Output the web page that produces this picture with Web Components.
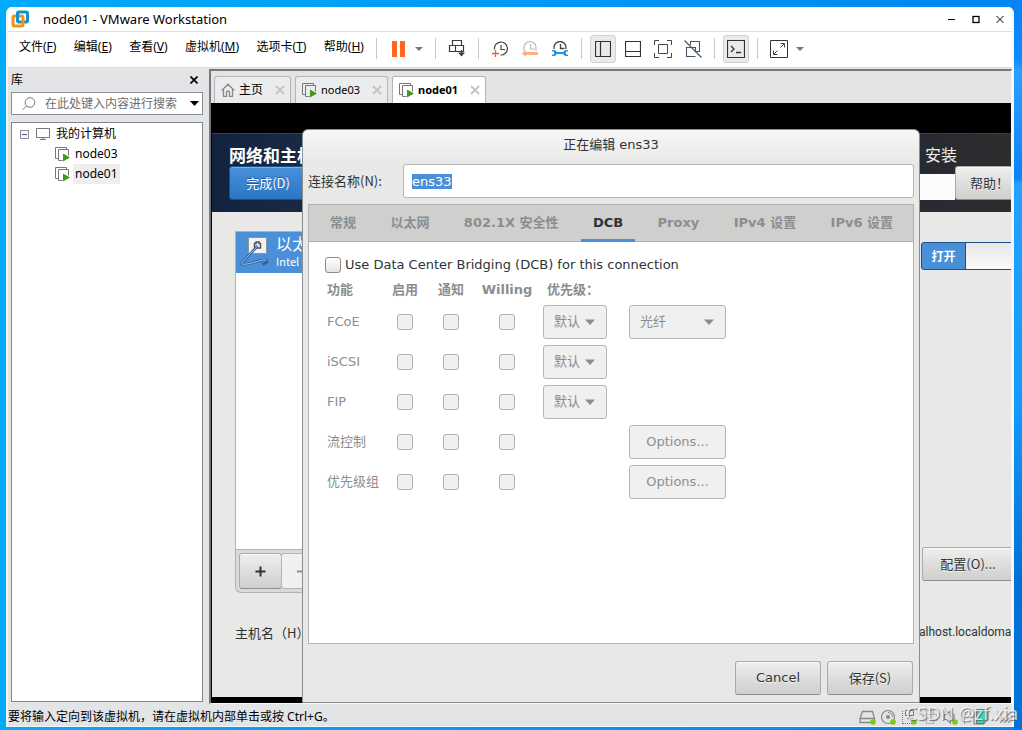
<!DOCTYPE html>
<html lang="zh-CN">
<head>
<meta charset="utf-8">
<title>node01 - VMware Workstation</title>
<style>
	html, body {
		height: 100%;
		margin: 0;
	}
	body {
		box-sizing: border-box;
		padding: 7px 8px 3px 6px;
		overflow: hidden;
		font: 12px/20px "Noto Sans", "Noto Sans CJK SC", sans-serif;
		color: #000;
		background:
			linear-gradient(to bottom, #0a80f4, #0c8cff 60px, #2a9fff 70px, #0a84f4 178px, #22a2ff 184px, #149afc 400px, #0070d8 580px, #0074dc) right / 8px 100% no-repeat,
			linear-gradient(to right, #00acfa, #009cf6 45%, #0086f0);
	}
</style>
</head>
<body>
<vm-window>
	<span slot="title">node01 - VMware Workstation</span>
	<vm-menu slot="bar"></vm-menu>
	<vm-toolbar slot="bar"></vm-toolbar>
	<vm-library slot="side"></vm-library>
	<vm-tab slot="tabs" icon="home">主页</vm-tab>
	<vm-tab slot="tabs" icon="running">node03</vm-tab>
	<vm-tab slot="tabs" icon="running" active>node01</vm-tab>
	<guest-screen slot="screen">
		<gtk-dialog>
			<span slot="title">正在编辑 ens33</span>
			<connection-name slot="name"></connection-name>
			<gtk-notebook slot="content" tabs="常规,以太网,802.1X 安全性,DCB,Proxy,IPv4 设置,IPv6 设置" current="DCB">
				<dcb-page></dcb-page>
			</gtk-notebook>
			<gtk-button slot="actions" class="dialog">Cancel</gtk-button>
			<gtk-button slot="actions" class="dialog cjk">保存(S)</gtk-button>
		</gtk-dialog>
	</guest-screen>
	<vm-status slot="status">要将输入定向到该虚拟机，请在虚拟机内部单击或按 Ctrl+G。</vm-status>
</vm-window>

<script>
const ICONS = {
	logo: [18, 18, `<g fill="none" stroke-width="3"><rect x="6.500" y="2" width="10" height="10" rx="1.500" stroke="#0d93d0"/><rect x="2" y="6" width="10" height="10" rx="1.500" stroke="#f8910f"/><path d="M6.500 8.500V3.500" stroke="#0d93d0"/></g>`],
	minimize: [8, 9, `<path d="M0 4.500h7" stroke="#000" stroke-width="1"/>`],
	maximize: [8, 9, `<rect x="1" y="1.500" width="6" height="6" fill="none" stroke="#000" stroke-width="1.300"/>`],
	close: [8, 9, `<path d="M.5 1l7 7M7.500 1l-7 7" stroke="#000"/>`],
	closeBold: [8, 8, `<path d="M.5.5l7 7M7.500.5l-7 7" stroke="#000" stroke-width="1.700"/>`],
	closeTab: [10, 10, `<path d="M1 1l8 8M9 1l-8 8" stroke="#c4c4c4" stroke-width="1.800"/>`],
	arrow: [8, 4, `<path d="M0 0h8l-4 4z" fill="#777"/>`],
	arrowBlack: [9, 5, `<path d="M0 0h9l-4.500 5z" fill="#000"/>`],
	arrowGtk: [10, 6, `<path d="M0 .5h10l-5 5.500z" fill="#8b8e8f"/>`],
	search: [14, 14, `<g fill="none" stroke="#777"><circle cx="8" cy="5.500" r="4.800"/><path d="M4.500 9L.5 13"/></g>`],
	home: [14, 14, `<path d="M.7 7.500L7 1.200l6.300 6.300M2.500 6.500v6.800h3V9.500a1.500 1.500 0 0 1 3 0v3.800h3V6.500" fill="none" stroke="#888" stroke-width="1.300"/>`],
	running: [15, 15, `<path d="M3.500 11.500H.5V.5h11v2M7.500 13.500h-4v-11h10v6" fill="none" stroke="#777"/><path d="M8 6.500l7 4-7 4z" fill="#3f9c12"/>`],
	computer: [14, 12, `<path d="M.5.5h13v9H.5z" fill="none" stroke="#777"/><path d="M7 9.500v2M4 11.500h6" stroke="#777"/>`],
	collapse: [9, 9, `<rect x=".5" y=".5" width="8" height="8" fill="#f6f6f6" stroke="#919191"/><path d="M2 4.500h5" stroke="#4455a0"/>`],
	pause: [13, 16, `<path d="M0 0h5v16H0zM8 0h5v16H8z" fill="#ff671b"/>`],
	send: [18, 17, `<g fill="none" stroke="#3c3c3c"><path d="M4.500.5h9v5h-9zM7.500 11.500h-6v-6h6zM7.500 5.500h8v6h-8M13.500 10v5" stroke-width="1.200"/></g><path d="M10 12.500h7l-3.500 4z" fill="#3c3c3c"/>`],
	snapshot: [16, 16, `<path d="M2.500 8.500a6.500 6.500 0 1 1 6 5.500M9 4v4.500h4" fill="none" stroke="#444" stroke-width="1.200"/><path d="M0 12.500h7M3.500 9v7" stroke="#f1632a" stroke-width="1.300"/>`],
	revert: [16, 16, `<path d="M2 10V6.500a6 6 0 0 1 12 0V10M8.500 3v5h4" fill="none" stroke="#bbb" stroke-width="1.200"/><path d="M0 12.500l4-3.500v2h12v3H4v2z" fill="#ffad84"/>`],
	manage: [16, 16, `<path d="M2 8V6.500a6 6 0 0 1 12 0V8M8.500 3v4.500h4" fill="none" stroke="#444" stroke-width="1.300"/><path d="M0 9h3l2 2h6l2-2h3v1.500h-2v3h2V15h-3l-2-2H5l-2 2H0v-1.500h2v-3H0z" fill="#2596dc"/>`],
	sidebar: [16, 16, `<path d="M.5.5h15v15H.5zM5.500.5v15" fill="none" stroke="#333" stroke-width="1.200"/>`],
	console: [16, 16, `<path d="M.5.5h15v15H.5zM.5 10.500h15" fill="none" stroke="#333" stroke-width="1.200"/>`],
	fullscreen: [18, 18, `<path d="M.5 5V.5H5M13 .5h4.500V5M17.500 13v4.500H13M5 17.500H.5V13M4.500 4.500h9v9h-9z" fill="none" stroke="#444"/>`],
	unity: [18, 18, `<path d="M6.500 5V1.500h9v10h-3M11.500 16.500h-9v-9h9v5M.5.500l17 17" fill="none" stroke="#445566" stroke-width="1.100"/>`],
	terminal: [18, 18, `<path d="M.5.5h17v17H.5z" fill="none" stroke="#333" stroke-width="1.200"/><path d="M4 6l3 3-3 3M9 12.500h5" fill="none" stroke="#333" stroke-width="1.300"/>`],
	stretch: [18, 18, `<path d="M.5.5h17v17H.5z" fill="none" stroke="#333"/><path d="M10.500 3.500h4v4M7.500 14.500h-4v-4M14 4l-3.500 3.500M4 14l3.500-3.500" fill="none" stroke="#444"/>`],
	ethernet: [32, 32, `<rect x="8.500" y=".5" width="18" height="16" rx="1" fill="#f2f2f0" stroke="#8c9398"/><path d="M14.500 11v-4.500h1.500V5h3v1.500h1.500V11z" fill="none" stroke="#454d55" stroke-width="1.400"/><path d="M17.500 9L2.500 25c-2 3 2 2.500 7 1.500s15-5 17-3-2 3-4 4" fill="none" stroke="#2f5f9f" stroke-width="2.600"/><path d="M17.500 9L2.500 25c-2 3 2 2.500 7 1.500s15-5 17-3" fill="none" stroke="#a8c6ea"/>`],
	disk: [18, 16, `<path d="M3.500 2.500h10l2 7v4H1v-4zM1 9.500h14.500" fill="none" stroke="#888" stroke-width="1.300"/><circle cx="14" cy="13" r="2.800" fill="#7dc81e"/>`],
	cd: [18, 16, `<circle cx="8" cy="8" r="6.500" fill="none" stroke="#888" stroke-width="1.200"/><circle cx="8" cy="8" r="2" fill="#888"/><path d="M8 3.500A4.500 4.500 0 0 1 12.500 8" fill="none" stroke="#888"/><circle cx="13" cy="13" r="2.800" fill="#7dc81e"/>`],
	network: [18, 16, `<path d="M1.500 2v13M2 14.500h9" stroke="#777" stroke-dasharray="1 1"/><path d="M4.500 1.500h8v5h-8zM8.500 6.500v3M6 9.500h7" fill="none" stroke="#777"/><circle cx="13" cy="13" r="2.800" fill="#7dc81e"/>`],
	printer: [18, 16, `<path d="M4.500 5.500v-4h7v4M3.500 11.500h-2v-6h13v6h-2M4.500 9.500h7v5h-7z" fill="none" stroke="#b4b4b4" stroke-width="1.200"/>`],
	sound: [18, 16, `<path d="M1.500 5.500h2l4-3.500v12l-4-3.500h-2zM10 4.500q2.500 3.500 0 7" fill="none" stroke="#888" stroke-width="1.200"/><circle cx="12" cy="13" r="2.800" fill="#7dc81e"/>`],
	note: [16, 16, `<path d="M3.500.5H15v10l-4 4H3.500z" fill="#36d8c0" stroke="#777"/><path d="M1 3.500v11.500h10V11h4" fill="none" stroke="#777"/>`],
	grip: [12, 12, `<path d="M0 12L12 0M4 12l8-8M8 12l4-4" stroke="#999" stroke-width="1.500"/>`],
	plus: [11, 11, `<path d="M5.500 .5v10M.5 5.500h10" stroke="#2e3436" stroke-width="2"/>`],
	minus: [11, 11, `<path d="M0 5.500h10" stroke="#8b8e8f" stroke-width="2"/>`]
};

class VmIcon extends HTMLElement {
	constructor() {
		super();
		this.attachShadow({ mode: 'open' });
	}
	connectedCallback() {
		const [w, h, body] = ICONS[this.getAttribute('name')];
		this.shadowRoot.innerHTML = `
		<style>
			:host { display: inline-flex; flex: none; }
			svg { display: block; }
		</style>
		<svg width="${w}" height="${h}" viewBox="0 0 ${w} ${h}" aria-hidden="true">${body}</svg>
		`
	}
}
customElements.define('vm-icon', VmIcon);

/* Outer frame: title bar, menu row, side panel, tabs, screen, status bar */
class VmWindow extends HTMLElement {
	constructor() {
		super();
		this.attachShadow({ mode: 'open' });
		this.shadowRoot.innerHTML = `
		<style>
			:host {
				display: flex;
				flex-direction: column;
				height: 100%;
				box-sizing: border-box;
				border: 0 solid #f4f5f6;
				border-width: 0 2px 1px 2px;
				border-radius: 6px 6px 0 0;
				background: #e3e4e6;
			}
			header {
				display: flex;
				align-items: center;
				height: 24px;
				padding-left: 3px;
				border-radius: 4px 4px 0 0;
				background: #fff;
				border-bottom: 1px solid #dfdfdf;
			}
			h1 {
				flex: 1;
				margin: 0 0 0 14px;
				font-size: 13px;
				font-weight: normal;
			}
			header button {
				display: grid;
				place-items: center;
				width: 24px;
				height: 24px;
				padding: 0;
				border: 0;
				background: none;
			}
			.bar {
				display: flex;
				align-items: center;
				height: 33px;
				padding-bottom: 2px;
				background: #fff;
				border-bottom: 1px solid #dcdcdc;
			}
			.work {
				flex: 1;
				display: flex;
				min-height: 0;
			}
			.side {
				display: flex;
				width: 201px;
			}
			main {
				flex: 1;
				min-width: 0;
				display: flex;
				flex-direction: column;
				margin-top: 1px;
				border: 1px solid #77777b;
				border-width: 2px 0 0 2px;
				border-right: 1px solid #f4f5f6;
				border-bottom: 1px solid #f4f5f6;
			}
			nav {
				display: flex;
				align-items: flex-end;
				gap: 4px;
				height: 32px;
				padding-left: 3px;
			}
			.screen {
				flex: 1;
				min-height: 0;
				display: flex;
			}
		</style>
		<header>
			<vm-icon name="logo"></vm-icon>
			<h1><slot name="title"></slot></h1>
			<button aria-label="minimize"><vm-icon name="minimize"></vm-icon></button>
			<button aria-label="maximize"><vm-icon name="maximize"></vm-icon></button>
			<button aria-label="close"><vm-icon name="close"></vm-icon></button>
		</header>
		<div class="bar"><slot name="bar"></slot></div>
		<div class="work">
			<div class="side"><slot name="side"></slot></div>
			<main>
				<nav><slot name="tabs"></slot></nav>
				<div class="screen"><slot name="screen"></slot></div>
			</main>
		</div>
		<slot name="status"></slot>
		`
	}
}
customElements.define('vm-window', VmWindow);

class VmMenu extends HTMLElement {
	constructor() {
		super();
		this.attachShadow({ mode: 'open' });
		const items = [['文件', 'F'], ['编辑', 'E'], ['查看', 'V'], ['虚拟机', 'M'], ['选项卡', 'T'], ['帮助', 'H']];
		this.shadowRoot.innerHTML = `
		<style>
			:host {
				display: flex;
				width: 362px;
				padding-bottom: 3px;
			}
			nav {
				flex: 1;
				display: flex;
				justify-content: space-between;
				padding: 0 6px 0 11px;
			}
			button {
				padding: 0;
				border: 0;
				background: none;
				font: inherit;
				color: inherit;
				white-space: nowrap;
			}
		</style>
		<nav>${items.map(i => `<button>${i[0]}(<u>${i[1]}</u>)</button>`).join('')}</nav>
		`
	}
}
customElements.define('vm-menu', VmMenu);

class VmToolbar extends HTMLElement {
	constructor() {
		super();
		this.attachShadow({ mode: 'open' });
		const groups = [
			['pause', 'arrow'],
			['send'],
			['snapshot', 'revert', 'manage'],
			['sidebar*', 'console', 'fullscreen', 'unity'],
			['terminal*'],
			['stretch', 'arrow']
		];
		const button = (name) => {
			const icon = name.replace('*', '');
			const kind = name.endsWith('*') ? 'on' : icon === 'arrow' ? 'drop' : '';
			return `<button class="${kind}" aria-label="${icon}"><vm-icon name="${icon}"></vm-icon></button>`
		};
		this.shadowRoot.innerHTML = `
		<style>
			:host { display: flex; }
			div {
				display: flex;
				align-items: center;
			}
			div::before {
				content: "";
				width: 1px;
				height: 21px;
				margin: 0 6px;
				background: #c8c8c8;
			}
			button {
				display: grid;
				place-items: center;
				box-sizing: border-box;
				width: 30px;
				height: 30px;
				padding: 0;
				border: 0;
				background: none;
			}
			.drop { width: 12px; margin-right: 4px; }
			.on {
				width: 26px;
				height: 28px;
				margin: 0 2px;
				border: 1px solid #d2d2d2;
				border-radius: 3px;
				background: #e9eaeb;
			}
		</style>
		${groups.map(g => `<div>${g.map(button).join('')}</div>`).join('')}
		`
	}
}
customElements.define('vm-toolbar', VmToolbar);

class VmLibrary extends HTMLElement {
	constructor() {
		super();
		this.attachShadow({ mode: 'open' });
		this.shadowRoot.innerHTML = `
		<style>
			:host {
				flex: 1;
				display: flex;
				flex-direction: column;
				min-width: 0;
				padding: 0 6px 2px 3px;
			}
			header {
				display: flex;
				align-items: center;
				justify-content: space-between;
				height: 24px;
				padding-right: 5px;
			}
			h2 {
				margin: 0;
				font-size: 12px;
				font-weight: normal;
			}
			button {
				display: grid;
				padding: 0;
				border: 0;
				background: none;
			}
			.search {
				display: flex;
				align-items: center;
				gap: 9px;
				height: 21px;
				padding: 0 3px 0 10px;
				border: 1px solid #8c8f94;
				background: #fff;
			}
			input {
				flex: 1;
				min-width: 0;
				padding: 0;
				border: 0;
				outline: 0;
				background: none;
				font: inherit;
			}
			input::placeholder { color: #6d6d6d; opacity: 1; }
			ul {
				margin: 0;
				padding: 0;
				list-style: none;
			}
			.tree {
				flex: 1;
				margin-top: 7px;
				padding-top: 1px;
				border: 1px solid #82868f;
				background: #fff;
			}
			.row {
				display: flex;
				align-items: center;
				height: 20px;
				padding-left: 8px;
			}
			.row span { padding: 0 2px; margin-left: 4px; }
			.row vm-icon + vm-icon { margin-left: 7px; }
			ul ul .row { padding-left: 43px; }
			ul ul .row span { margin-left: 3px; }
			.current { background: #eee; }
		</style>
		<header><h2>库</h2><button aria-label="close"><vm-icon name="closeBold"></vm-icon></button></header>
		<div class="search">
			<vm-icon name="search"></vm-icon>
			<input type="text" placeholder="在此处键入内容进行搜索" aria-label="搜索">
			<vm-icon name="arrowBlack"></vm-icon>
		</div>
		<ul class="tree">
			<li>
				<div class="row"><vm-icon name="collapse"></vm-icon><vm-icon name="computer"></vm-icon><span>我的计算机</span></div>
				<ul>
					<li class="row"><vm-icon name="running"></vm-icon><span>node03</span></li>
					<li class="row"><vm-icon name="running"></vm-icon><span class="current">node01</span></li>
				</ul>
			</li>
		</ul>
		`
	}
}
customElements.define('vm-library', VmLibrary);

class VmTab extends HTMLElement {
	constructor() {
		super();
		this.attachShadow({ mode: 'open' });
	}
	connectedCallback() {
		this.shadowRoot.innerHTML = `
		<style>
			:host {
				display: flex;
				align-items: center;
				box-sizing: border-box;
				height: 27px;
				padding: 0 5px 0 6px;
				border: 1px solid #b4b4b6;
				border-bottom: 0;
				border-radius: 3px 3px 0 0;
				background: #ebecee;
			}
			:host([active]) {
				background: #fff;
				font-weight: bold;
			}
			.label { margin: 0 12px 0 4px; font-size: 11px; }
			:host([icon=home]) .label { font-size: 12px; }
			button {
				display: grid;
				padding: 0;
				border: 0;
				background: none;
			}
		</style>
		<vm-icon name="${this.getAttribute('icon')}"></vm-icon>
		<span class="label"><slot></slot></span>
		<button aria-label="close"><vm-icon name="closeTab"></vm-icon></button>
		`
	}
}
customElements.define('vm-tab', VmTab);

class VmStatus extends HTMLElement {
	constructor() {
		super();
		this.attachShadow({ mode: 'open' });
		this.shadowRoot.innerHTML = `
		<style>
			:host {
				position: relative;
				box-sizing: border-box;
				display: flex;
				align-items: center;
				gap: 3px;
				height: 22px;
				padding-top: 4px;
			}
			.text { flex: 1; }
			hr {
				width: 1px;
				height: 14px;
				margin: 0 5px 0 0;
				border: 0;
				background: #999;
			}
			.last { margin-left: 8px; }
			.mark {
				position: absolute;
				right: -6px;
				bottom: 3px;
				font-size: 18px;
				white-space: nowrap;
				color: rgba(255,255,255,0.75);
				text-shadow: 1px 1px 1px rgba(90,90,90,0.8);
			}
		</style>
		<span class="text"><slot></slot></span>
		<vm-icon name="disk"></vm-icon>
		<vm-icon name="cd"></vm-icon>
		<vm-icon name="network"></vm-icon>
		<vm-icon name="printer"></vm-icon>
		<vm-icon name="sound"></vm-icon>
		<hr>
		<vm-icon name="note"></vm-icon>
		<vm-icon class="last" name="grip"></vm-icon>
		<span class="mark">CSDN @zf.xia</span>
		`
	}
}
customElements.define('vm-status', VmStatus);

class GtkButton extends HTMLElement {
	constructor() {
		super();
		this.attachShadow({ mode: 'open' });
		this.shadowRoot.innerHTML = `
		<style>
			:host {
				display: block;
				height: 34px;
				font: 13px/20px "DejaVu Sans", "Noto Sans CJK SC", sans-serif;
			}
			:host(.cjk) { font-family: "Noto Sans CJK SC", sans-serif; }
			:host(.dialog) { width: 86px; }
			button {
				display: grid;
				place-items: center;
				justify-items: var(--button-align, center);
				box-sizing: border-box;
				width: 100%;
				height: 100%;
				padding: 0 var(--button-pad, 0);
				border: 1px solid #aaaaa8;
				border-bottom-color: #8b8e8f;
				border-radius: 3px;
				background: linear-gradient(#efefed, #dededc 50%, #cfcfcd);
				box-shadow: inset 0 1px #fafafa;
				font: inherit;
				color: #2e3436;
				white-space: nowrap;
				text-shadow: 0 1px #f4f4f4;
			}
			:host(.primary) button {
				border-color: #1c5187;
				background: linear-gradient(#4a90d9, #2a76c6);
				box-shadow: inset 0 1px #7ab0e6;
				color: #fff;
				text-shadow: 0 -1px #215d9c;
			}
			:host([disabled]) button {
				border-color: #b5b5b3;
				background: #f0f0f0;
				box-shadow: none;
				color: #8b8e8f;
				text-shadow: none;
			}
		</style>
		<button><slot></slot></button>
		`
	}
	connectedCallback() {
		this.shadowRoot.querySelector('button').disabled = this.hasAttribute('disabled');
	}
}
customElements.define('gtk-button', GtkButton);

/* Installer page that runs in the guest, the dialog is slotted over it */
class GuestScreen extends HTMLElement {
	constructor() {
		super();
		this.attachShadow({ mode: 'open' });
		this.shadowRoot.innerHTML = `
		<style>
			:host {
				position: relative;
				flex: 1;
				min-width: 0;
				display: flex;
				flex-direction: column;
				overflow: hidden;
				padding: 30px 0 6px 1px;
				background: #000;
				font: 13px/20px "Noto Sans CJK SC", sans-serif;
				color: #2e3436;
			}
			header {
				display: flex;
				justify-content: space-between;
				height: 78px;
				border-top: 1px solid #3c3f46;
				background: linear-gradient(to right, #12233f, #1a2a44 12%, #272a31 88%, #2d2d2e);
			}
			.left { padding: 10px 0 0 17px; }
			.right { width: 92px; }
			h2 {
				margin: 0;
				font-size: 17px;
				line-height: 22px;
				color: #fff;
			}
			.left gtk-button { width: 78px; }
			.product {
				margin: 0;
				padding: 9px 0 0 6px;
				font-size: 16px;
				line-height: 22px;
				height: 30px;
				box-sizing: border-box;
				color: #eee;
			}
			.help {
				display: flex;
				height: 36px;
			}
			.layout {
				flex: 0 0 36px;
				height: 26px;
				margin-top: 10px;
				background: #fcfcfc;
			}
			.help gtk-button {
				flex: 0 0 78px;
				margin-top: 2px;
				--button-align: start;
				--button-pad: 14px;
			}
			.body {
				flex: 1;
				min-height: 0;
				display: flex;
				justify-content: space-between;
				background: #e8e8e6;
			}
			.devices {
				display: flex;
				flex-direction: column;
				width: 240px;
				padding: 19px 0 0 23px;
			}
			.list {
				flex: 1;
				border: 1px solid #b1b1af;
				background: #fff;
			}
			.item {
				display: flex;
				gap: 4px;
				height: 41px;
				padding-left: 4px;
				align-items: center;
				background: #4a90d9;
				color: #fff;
			}
			.item div { padding-bottom: 5px; }
			.item b {
				display: block;
				font-size: 16px;
				font-weight: normal;
				line-height: 22px;
			}
			.item small { display: block; font-size: 11px; line-height: 14px; }
			.tools {
				display: flex;
				height: 36px;
				padding: 3px;
				border: 1px solid #b1b1af;
				border-top: 0;
				border-radius: 0 0 0 6px;
				background: #dadad8;
			}
			.tools gtk-button { width: 43px; height: 36px; }
			.tools gtk-button + gtk-button { margin-left: -1px; }
			.host {
				height: 74px;
				padding-top: 30px;
			}
			.state {
				display: flex;
				flex-direction: column;
				width: 92px;
				box-sizing: border-box;
				padding: 30px 0 55px;
			}
			.switch {
				display: flex;
				width: 92px;
				height: 26px;
				margin-left: 2px;
				border: 1px solid #1c5187;
				border-radius: 3px;
				background: #4a90d9;
				padding: 0;
				font: bold 12px/24px "Noto Sans CJK SC", sans-serif;
				color: #fff;
				align-items: center;
				box-sizing: content-box;
			}
			.switch span { flex: 0 0 43px; text-align: center; }
			.switch i {
				flex: 1;
				align-self: stretch;
				border-left: 1px solid #1c5187;
				background: linear-gradient(#e8e8e8, #fafafa);
			}
			.state gtk-button {
				width: 92px;
				margin: auto 0 41px 3px;
			}
			.state p {
				margin: 0;
				font-family: Roboto, sans-serif;
				font-size: 12px;
			}
		</style>
		<header>
			<div class="left">
				<h2>网络和主机</h2>
				<gtk-button class="primary cjk">完成(D)</gtk-button>
			</div>
			<div class="right">
				<p class="product">安装</p>
				<div class="help"><span class="layout"></span><gtk-button class="cjk">帮助！</gtk-button></div>
			</div>
		</header>
		<div class="body">
			<div class="devices">
				<div class="list">
					<div class="item"><vm-icon name="ethernet"></vm-icon><div><b>以太</b><small>Intel C</small></div></div>
				</div>
				<div class="tools">
					<gtk-button aria-label="add"><vm-icon name="plus"></vm-icon></gtk-button>
					<gtk-button aria-label="remove" disabled><vm-icon name="minus"></vm-icon></gtk-button>
				</div>
				<div class="host">主机名（H）</div>
			</div>
			<div class="state">
				<button class="switch" role="switch" aria-checked="true"><span>打开</span><i></i></button>
				<gtk-button class="cjk">配置(O)...</gtk-button>
				<p>alhost.localdoma</p>
			</div>
		</div>
		<slot></slot>
		`
	}
}
customElements.define('guest-screen', GuestScreen);

class GtkDialog extends HTMLElement {
	constructor() {
		super();
		this.attachShadow({ mode: 'open' });
		this.shadowRoot.innerHTML = `
		<style>
			:host {
				position: absolute;
				top: 26px;
				bottom: 0;
				left: 91px;
				right: 91px;
				display: flex;
				flex-direction: column;
				padding: 0 5px 7px;
				border: 1px solid #8b8e8f;
				border-radius: 6px 6px 0 0;
				background: linear-gradient(#f6f6f6, #e8e8e6 34px);
				font: 13px/20px "DejaVu Sans", "Noto Sans CJK SC", sans-serif;
				color: #2e3436;
			}
			h3 {
				margin: 0;
				font-size: 13px;
				font-weight: normal;
				line-height: 30px;
				height: 34px;
				text-align: center;
			}
			.actions {
				display: flex;
				justify-content: flex-end;
				gap: 6px;
				padding: 17px 1px 0 0;
			}
		</style>
		<h3><slot name="title"></slot></h3>
		<slot name="name"></slot>
		<slot name="content"></slot>
		<div class="actions"><slot name="actions"></slot></div>
		`
	}
}
customElements.define('gtk-dialog', GtkDialog);

class ConnectionName extends HTMLElement {
	constructor() {
		super();
		this.attachShadow({ mode: 'open' });
		this.shadowRoot.innerHTML = `
		<style>
			:host {
				display: flex;
				align-items: center;
				height: 34px;
				margin-bottom: 6px;
			}
			label {
				width: 95px;
				font-family: "Noto Sans CJK SC", sans-serif;
			}
			input {
				flex: 1;
				min-width: 0;
				box-sizing: border-box;
				height: 34px;
				padding: 0 8px;
				border: 1px solid #b5b5b3;
				border-radius: 3px;
				outline: 0;
				background: #fff;
				font: inherit;
				color: #2e3436;
			}
			input::selection { background: #4a90d9; color: #fff; }
		</style>
		<label for="name">连接名称(N):</label>
		<input id="name" type="text" value="ens33">
		`
	}
	connectedCallback() {
		const input = this.shadowRoot.querySelector('input');
		input.focus();
		input.select();
	}
}
customElements.define('connection-name', ConnectionName);

class GtkNotebook extends HTMLElement {
	constructor() {
		super();
		this.attachShadow({ mode: 'open' });
	}
	connectedCallback() {
		const current = this.getAttribute('current');
		const tabs = this.getAttribute('tabs').split(',');
		this.shadowRoot.innerHTML = `
		<style>
			:host {
				flex: 1;
				min-height: 0;
				display: flex;
				flex-direction: column;
				border: 1px solid #b1b1af;
				background: #fff;
			}
			nav {
				display: flex;
				justify-content: space-between;
				height: 36px;
				padding: 0 8px 0 9px;
				border-bottom: 1px solid #b1b1af;
				background: #cfcfcd;
			}
			button {
				height: 37px;
				padding: 0 12px 2px;
				border: 0;
				background: none;
				font: inherit;
				font-weight: bold;
				white-space: nowrap;
				color: #8b8e8f;
			}
			button[aria-selected=true] {
				color: #2e3436;
				box-shadow: inset 0 -3px #4a90d9;
			}
		</style>
		<nav role="tablist">
			${tabs.map(t => `<button role="tab" aria-selected="${t === current}">${t}</button>`).join('')}
		</nav>
		<slot></slot>
		`
	}
}
customElements.define('gtk-notebook', GtkNotebook);

class DcbPage extends HTMLElement {
	constructor() {
		super();
		this.attachShadow({ mode: 'open' });
		const select = (text, cls, label) => `
			<div class="combo ${cls}"><select disabled aria-label="${label}"><option>${text}</option></select><vm-icon name="arrowGtk"></vm-icon></div>`;
		const rows = [
			['FCoE', true, select('光纤', 'wide', 'FCoE 模式')],
			['iSCSI', true, ''],
			['FIP', true, ''],
			['流控制', false, '<gtk-button disabled>Options...</gtk-button>'],
			['优先级组', false, '<gtk-button disabled>Options...</gtk-button>']
		];
		const check = (row, col) => `<td><input type="checkbox" disabled aria-label="${row} ${col}"></td>`;
		this.shadowRoot.innerHTML = `
		<style>
			:host {
				display: block;
				padding: 8px 16px;
			}
			input {
				appearance: none;
				box-sizing: border-box;
				width: 16px;
				height: 16px;
				margin: 0;
				border: 1px solid #8b8e8f;
				border-radius: 3px;
				background: linear-gradient(#fff, #e4e4e2);
			}
			input:disabled {
				display: block;
				margin: 0 auto;
				border-color: #b1b1af;
				background: #f0f0f0;
			}
			.use {
				display: flex;
				align-items: center;
				gap: 4px;
				height: 30px;
			}
			table {
				table-layout: fixed;
				width: 399px;
				margin-left: 2px;
				border-collapse: collapse;
				color: #8b8e8f;
			}
			th, td { padding: 0; height: 40px; }
			thead th { height: 20px; padding-bottom: 2px; }
			th { text-align: left; }
			tbody th { font-weight: normal; white-space: nowrap; }
			.mid { text-align: center; }
			.pri { padding-left: 7px; }
			.level { padding-left: 3px; }
			.combo {
				display: grid;
				grid-template-columns: 1fr 18px;
				align-items: center;
				width: 64px;
			}
			.combo.wide { width: 97px; }
			.combo > * { grid-row: 1; }
			select {
				grid-column: 1 / 3;
				appearance: none;
				box-sizing: border-box;
				width: 100%;
				height: 34px;
				padding: 0 10px;
				border: 1px solid #b5b5b3;
				border-radius: 3px;
				background: #f0f0f0;
				font: inherit;
				color: inherit;
				opacity: 1;
			}
			.combo vm-icon { grid-column: 2; margin-left: -4px; }
		</style>
		<label class="use"><input type="checkbox">Use Data Center Bridging (DCB) for this connection</label>
		<table>
			<colgroup>
				<col style="width:55px"><col style="width:46px"><col style="width:46px"><col style="width:66px"><col style="width:89px"><col>
			</colgroup>
			<thead>
				<tr><th>功能</th><th class="mid">启用</th><th class="mid">通知</th><th class="mid">Willing</th><th class="pri">优先级：</th><th></th></tr>
			</thead>
			<tbody>
				${rows.map(r => `
				<tr>
					<th>${r[0]}</th>
					${['启用', '通知', 'Willing'].map(c => check(r[0], c)).join('')}
					<td class="level">${r[1] ? select('默认', '', r[0] + ' 优先级') : ''}</td>
					<td>${r[2]}</td>
				</tr>`).join('')}
			</tbody>
		</table>
		`
	}
}
customElements.define('dcb-page', DcbPage);
</script>
</body>
</html>
